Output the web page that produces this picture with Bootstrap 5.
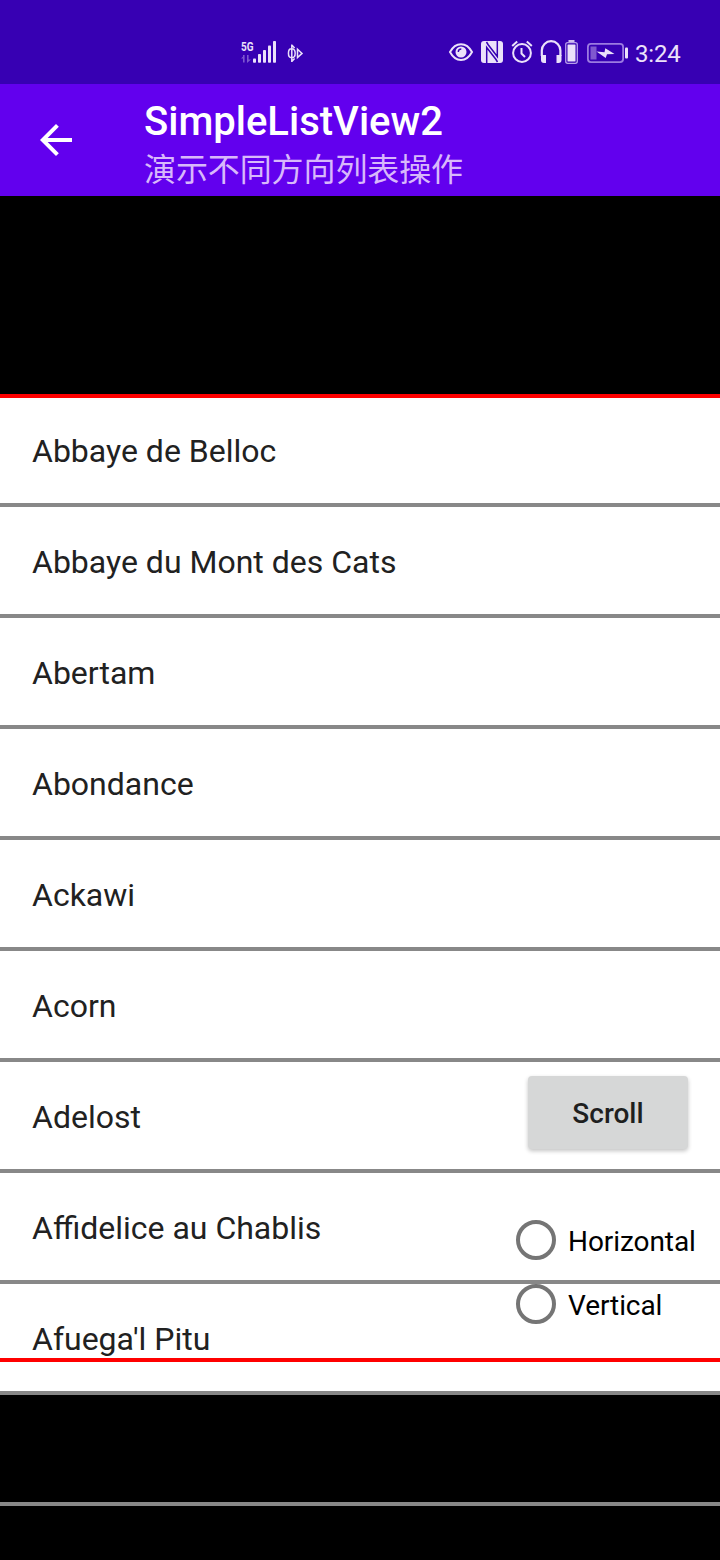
<!DOCTYPE html>
<html lang="zh-CN">
<head>
<meta charset="utf-8">
<meta name="viewport" content="width=device-width, initial-scale=1">
<title>SimpleListView2</title>
<link href="https://cdn.jsdelivr.net/npm/bootstrap@5.3.0/dist/css/bootstrap.min.css" rel="stylesheet">
<style>
body{font-family:Roboto,"Noto Sans CJK SC",sans-serif;background:#000;height:1560px;overflow:hidden}
.status-bar{height:84px;background:#3700b3;color:#ebe1fa;padding:36px 40px 0 0}
.status-left{margin-left:240px}
.clock{font-size:24px;line-height:36px;margin-left:7px;width:45px;white-space:nowrap;letter-spacing:-.2px}
.app-bar{height:112px;background:#6200ee}
.back{width:144px;padding-left:32px}
.app-title{font-size:40px;line-height:46px;font-weight:500;padding-top:15px}
.app-sub{font-size:32px;line-height:46px;color:#d8b8fb;margin-top:2px;letter-spacing:-.1px}
.stage{height:1364px;padding-top:198px}
.viewport-box{height:968px;z-index:2;border:solid #f00;border-width:4px 0;pointer-events:none;left:0;right:0;top:198px}
.cheeses .list-group-item{height:111px;padding:2px 32px 0;border:0;border-bottom:4px solid #888;font-size:32px;color:#212121;background:#fff}
.cheeses .list-group-item:first-child{height:113px;padding-top:4px}
.cheeses .blank-item.list-group-item{background:#000;border-bottom:4px solid #888}
.controls{right:0;top:880px;width:204px;z-index:3}
.scroll-btn{width:160px;height:73px;margin-left:12px;background:#d6d7d7;border:0;border-radius:4px;font-size:28px;font-weight:500;color:#1f1f1f;box-shadow:0 2px 4px rgba(0,0,0,.24);padding:2px 0 0}
.radios{margin-top:59px}
.radios label{height:64px;gap:12px;font-size:28px;color:#000}
.radios span{padding-top:3px;letter-spacing:-.07px}
.radios input{width:40px;height:40px;border:4px solid #757575;background:transparent}
</style>
<script src="https://cdn.jsdelivr.net/npm/bootstrap@5.3.0/dist/js/bootstrap.bundle.min.js"></script>
</head>
<body>
<div class="status-bar d-flex justify-content-between align-items-start">
  <div class="status-left">
    <svg class="d-block" width="66" height="34" viewBox="240 36 66 34" fill="#ebe1fa">
      <text x="241" y="50.500" font-size="13" font-weight="700" textLength="12.500" lengthAdjust="spacingAndGlyphs">5G</text>
      <path d="M241 58.500L244.500 55v7.500H243v-4zM247 55h1.600v4.500h2.400L247 63zM243 55h1.600v7.500H243z" fill="#7d57cf"/>
      <rect x="253" y="58.500" width="3" height="4.300" rx=".8"/><rect x="258" y="54" width="3" height="8.800" rx=".8"/><rect x="263" y="50" width="3" height="12.800" rx=".8"/><rect x="268" y="45.500" width="3" height="17.300" rx=".8"/><rect x="273" y="41" width="3" height="21.800" rx=".8"/>
      <g fill="none" stroke="#ebe1fa" stroke-width="1.500"><path d="M291.800 44.500v17.500M291.800 45l2.800 3M291.800 61.500l2.800-3M291.300 48.800c-3.800 0-3.800 8.800 0 8.800h1c3.800 0 3.800-8.800 0-8.800zM297.500 49.300v8.200l4.500-4.100z"/></g>
    </svg>
  </div>
  <div class="d-flex">
    <svg width="180" height="34" viewBox="448 36 180 34" fill="none" stroke="#ebe1fa" stroke-width="2">
      <path d="M450 52c5.500-10.500 16.500-10.500 22 0-5.500 10.500-16.500 10.500-22 0z"/><circle cx="461" cy="52" r="5.500" fill="#ebe1fa" stroke="none"/><path d="M458.300 52a3 3 0 0 1 3-3" stroke="#3700b3" stroke-width="1.400"/>
      <rect x="481" y="41" width="22" height="22" rx="3" fill="#ebe1fa" stroke="none"/><path d="M486.700 63V47.500L496 59.500l1.500 2.500M497.300 41v15.500L488 44.500 486.500 42" stroke="#3700b3" stroke-width="1.500"/>
      <circle cx="522" cy="53" r="8.900"/><path d="M521.500 48v5.500l3.500 3.500M512.200 46l5-4.500M531.800 46l-5-4.500"/>
      <path d="M541.800 56v-5.500a9.300 9.300 0 0 1 18.600 0V56" stroke-width="2.200"/><path d="M541 55h5v8h-2q-3 0-3-3zM556.500 55h5v5q0 3-3 3h-2z" fill="#ebe1fa" stroke="none"/>
      <rect x="565.700" y="42.700" width="11.600" height="20.600" rx="2" stroke="#b69de9" stroke-width="1.300"/><rect x="567.500" y="44.500" width="8" height="17" rx=".5" fill="#ebe1fa" stroke="none"/><path d="M568.500 41h6" stroke-width="1.700"/>
      <rect x="587.900" y="43.900" width="35.200" height="18.200" rx="3" stroke="#9c7be1" stroke-width="1.800"/><rect x="590.500" y="46.500" width="6" height="13" fill="#8058cf" stroke="none"/><path d="M596.500 51.500l8 .8.8-4 9.200 5.700-7.500.3-1.300 3.700z" fill="#ebe1fa" stroke="none"/><rect x="625" y="47.500" width="3" height="11" rx="1" fill="#ebe1fa" stroke="none"/>
    </svg>
    <span class="clock">3:24</span>
  </div>
</div>
<header class="app-bar d-flex text-white">
  <div class="back d-flex align-items-center">
    <svg width="48" height="48" viewBox="0 0 24 24" fill="#fff"><path d="M20 11H7.830l5.590-5.590L12 4l-8 8 8 8 1.410-1.410L7.830 13H20v-2z"/></svg>
  </div>
  <div>
    <div class="app-title">SimpleListView2</div>
    <div class="app-sub">演示不同方向列表操作</div>
  </div>
</header>
<main class="stage position-relative">
  <div class="viewport-box position-absolute"></div>
  <ul class="cheeses list-group list-group-flush">
    <li class="list-group-item d-flex align-items-center">Abbaye de Belloc</li>
    <li class="list-group-item d-flex align-items-center">Abbaye du Mont des Cats</li>
    <li class="list-group-item d-flex align-items-center">Abertam</li>
    <li class="list-group-item d-flex align-items-center">Abondance</li>
    <li class="list-group-item d-flex align-items-center">Ackawi</li>
    <li class="list-group-item d-flex align-items-center">Acorn</li>
    <li class="list-group-item d-flex align-items-center">Adelost</li>
    <li class="list-group-item d-flex align-items-center">Affidelice au Chablis</li>
    <li class="list-group-item d-flex align-items-center">Afuega'l Pitu</li>
    <li class="list-group-item blank-item"></li>
  </ul>
  <div class="controls position-absolute">
    <button class="scroll-btn btn" type="button">Scroll</button>
    <div class="radios">
      <label class="d-flex align-items-center"><input class="form-check-input m-0 flex-shrink-0" type="radio" name="dir"><span>Horizontal</span></label>
      <label class="d-flex align-items-center"><input class="form-check-input m-0 flex-shrink-0" type="radio" name="dir"><span>Vertical</span></label>
    </div>
  </div>
</main>
</body>
</html>
